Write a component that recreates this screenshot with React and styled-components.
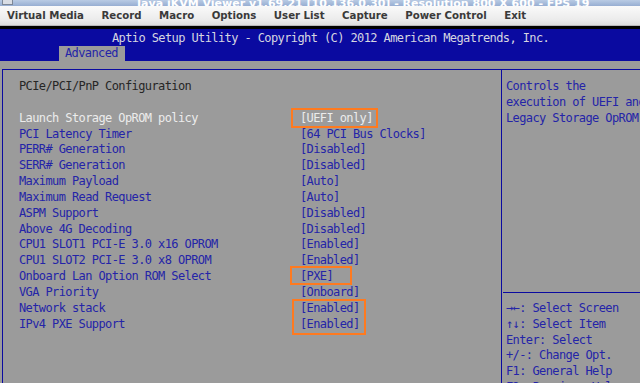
import React from "react";
import styled, { createGlobalStyle } from "styled-components";

const GlobalStyle = createGlobalStyle`
  html, body {
    margin: 0;
    padding: 0;
    background: #9b9b9b;
  }
`;

const BIOS_BLUE = "#0a0aa0";
const TEXT_BLUE = "#2424a8";
const ROW = 15.85;

const Screen = styled.div`
  width: 640px;
  height: 383px;
  overflow: hidden;
  display: flex;
  flex-direction: column;
  background: #9b9b9b;
`;

const TitleBar = styled.div`
  height: 6px;
  flex: none;
  overflow: hidden;
  display: flex;
  align-items: flex-end;
  background: linear-gradient(#b9cbe4, #97aed2);
  padding-left: 2px;
`;

const TitleIcon = styled.div`
  width: 9px;
  height: 4px;
  background: #d9dde4;
  border: 1px solid #7d8796;
  border-top: none;
  margin-bottom: 1px;
`;

const TitleText = styled.div`
  margin: 0 0 -3px 124px;
  font-family: "DejaVu Sans", sans-serif;
  font-weight: bold;
  font-size: 11px;
  line-height: 10px;
  color: #ffffff;
  white-space: nowrap;
`;

const MenuBar = styled.div`
  height: 19px;
  flex: none;
  display: flex;
  align-items: center;
  gap: 17.5px;
  padding-left: 7px;
  background: linear-gradient(#fafafa, #ececec 70%, #dddddd);
  border-bottom: 1px solid #b8b8b8;
  font-family: "DejaVu Sans", sans-serif;
  font-weight: bold;
  font-size: 10.2px;
  color: #3a3a3a;
`;

const MenuItem = styled.span`
  white-space: nowrap;
`;

const BlackStrip = styled.div`
  height: 3px;
  flex: none;
  background: #000;
`;

const Header = styled.div`
  height: 32px;
  flex: none;
  display: flex;
  flex-direction: column;
  justify-content: space-between;
  background: ${BIOS_BLUE};
`;

const Mono = styled.div`
  font-family: "DejaVu Sans Mono", "Liberation Mono", monospace;
  font-size: 12px;
  letter-spacing: -0.6px;
  white-space: nowrap;
`;

const HeaderTitle = styled(Mono)`
  padding: 2px 0 0 112px;
  line-height: 15px;
  color: #d6d6e0;
`;

const TabRow = styled.div`
  display: flex;
  padding-left: 59px;
`;

const Tab = styled(Mono)`
  width: 66px;
  height: 15px;
  line-height: 15px;
  padding-left: 6px;
  box-sizing: border-box;
  background: #9b9b9b;
  color: ${TEXT_BLUE};
`;

const Content = styled.div`
  flex: 1;
  padding: 8px 0 0 2px;
  overflow: hidden;
`;

const Frame = styled.div`
  height: 100%;
  display: flex;
  border-top: 1px solid ${BIOS_BLUE};
`;

const MainPanel = styled.div`
  position: relative;
  width: 482px;
  flex: none;
  border-left: 1px solid ${BIOS_BLUE};
  border-right: 1px solid ${BIOS_BLUE};
  padding: 9px 0 0 16px;
`;

const HelpPanel = styled.div`
  flex: 1;
  padding: 9px 0 0 4px;
  overflow: hidden;
`;

const Line = styled(Mono)`
  height: ${ROW}px;
  line-height: ${ROW}px;
  color: ${(p) => p.$color || TEXT_BLUE};
`;

const Row = styled.div`
  display: grid;
  grid-template-columns: 281px 1fr;
`;

const Spacer = styled.div`
  height: ${(p) => p.$lines * ROW}px;
`;

const Divider = styled.div`
  height: ${ROW}px;
  display: flex;
  align-items: center;
  margin-left: -3px;
  &::before {
    content: "";
    flex: 1;
    border-top: 1px solid ${BIOS_BLUE};
  }
`;

const Mark = styled.div`
  position: absolute;
  border: 2px solid #ff7a1f;
  box-sizing: border-box;
`;

const menu = ["Virtual Media", "Record", "Macro", "Options", "User List", "Capture", "Power Control", "Exit"];

const settings = [
  ["Launch Storage OpROM policy", "[UEFI only]", true],
  ["PCI Latency Timer", "[64 PCI Bus Clocks]"],
  ["PERR# Generation", "[Disabled]"],
  ["SERR# Generation", "[Disabled]"],
  ["Maximum Payload", "[Auto]"],
  ["Maximum Read Request", "[Auto]"],
  ["ASPM Support", "[Disabled]"],
  ["Above 4G Decoding", "[Disabled]"],
  ["CPU1 SLOT1 PCI-E 3.0 x16 OPROM", "[Enabled]"],
  ["CPU1 SLOT2 PCI-E 3.0 x8 OPROM", "[Enabled]"],
  ["Onboard Lan Option ROM Select", "[PXE]"],
  ["VGA Priority", "[Onboard]"],
  ["Network stack", "[Enabled]"],
  ["IPv4 PXE Support", "[Enabled]"],
];

// annotation boxes drawn over the setup screen
const marks = [
  { left: 288, top: 38, width: 87, height: 20 },
  { left: 287, top: 196, width: 62, height: 19 },
  { left: 289, top: 229, width: 74, height: 36 },
];

const helpText = ["Controls the", "execution of UEFI and", "Legacy Storage OpROM"];

const keys = [
  "→←: Select Screen",
  "↑↓: Select Item",
  "Enter: Select",
  "+/-: Change Opt.",
  "F1: General Help",
  "F2: Previous Values",
];

export default function App() {
  return (
    <Screen>
      <GlobalStyle />
      <TitleBar>
        <TitleIcon />
        <TitleText>Java iKVM Viewer v1.69.21 [10.136.0.30] - Resolution 800 X 600 - FPS 19</TitleText>
      </TitleBar>
      <MenuBar>
        {menu.map((m) => (
          <MenuItem key={m}>{m}</MenuItem>
        ))}
      </MenuBar>
      <BlackStrip />
      <Header>
        <HeaderTitle>Aptio Setup Utility - Copyright (C) 2012 American Megatrends, Inc.</HeaderTitle>
        <TabRow>
          <Tab>Advanced</Tab>
        </TabRow>
      </Header>
      <Content>
        <Frame>
          <MainPanel>
            <Line $color="#262626">PCIe/PCI/PnP Configuration</Line>
            <Spacer $lines={1} />
            {settings.map(([label, value, selected]) => (
              <Row key={label}>
                <Line $color={selected ? "#ececec" : undefined}>{label}</Line>
                <Line $color={selected ? "#ececec" : undefined}>{value}</Line>
              </Row>
            ))}
            {marks.map((m, i) => (
              <Mark key={i} style={m} />
            ))}
          </MainPanel>
          <HelpPanel>
            {helpText.map((t) => (
              <Line key={t}>{t}</Line>
            ))}
            <Spacer $lines={10} />
            <Divider />
            {keys.map((k) => (
              <Line key={k}>{k}</Line>
            ))}
          </HelpPanel>
        </Frame>
      </Content>
    </Screen>
  );
}
